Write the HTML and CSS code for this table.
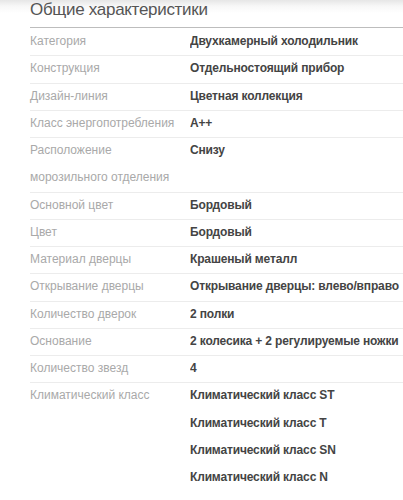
FILE: index.html
```html
<!DOCTYPE html>
<html lang="ru">
<head>
<meta charset="utf-8">
<link rel="stylesheet" href="styles.css">
</head>
<body>
<div class="page">
  <section class="specs">
    <h2 class="specs-title">Общие характеристики</h2>
    <div class="row"><div class="label">Категория</div><div class="value">Двухкамерный холодильник</div></div>
    <div class="row"><div class="label">Конструкция</div><div class="value">Отдельностоящий прибор</div></div>
    <div class="row"><div class="label">Дизайн-линия</div><div class="value">Цветная коллекция</div></div>
    <div class="row"><div class="label">Класс энергопотребления</div><div class="value">A++</div></div>
    <div class="row"><div class="label">Расположение<br>морозильного отделения</div><div class="value">Снизу</div></div>
    <div class="row"><div class="label">Основной цвет</div><div class="value">Бордовый</div></div>
    <div class="row"><div class="label">Цвет</div><div class="value">Бордовый</div></div>
    <div class="row"><div class="label">Материал дверцы</div><div class="value">Крашеный металл</div></div>
    <div class="row"><div class="label">Открывание дверцы</div><div class="value">Открывание дверцы: влево/вправо</div></div>
    <div class="row"><div class="label">Количество дверок</div><div class="value">2 полки</div></div>
    <div class="row"><div class="label">Основание</div><div class="value">2 колесика + 2 регулируемые ножки</div></div>
    <div class="row"><div class="label">Количество звезд</div><div class="value">4</div></div>
    <div class="row last"><div class="label">Климатический класс</div><div class="value">Климатический класс ST<br>Климатический класс T<br>Климатический класс SN<br>Климатический класс N</div></div>
  </section>
</div>
</body>
</html>
```
FILE: styles.css
```css
html, body {
  margin: 0;
  padding: 0;
  background: #fff;
  overflow: hidden;
}
.page {
  width: 403px;
  height: 500px;
  box-sizing: border-box;
  overflow: hidden;
  background: linear-gradient(to bottom, #e6e6e6 0px, #f7f7f7 6px, #ffffff 13px);
  padding-left: 30px;
  font-family: "Liberation Sans", Arial, sans-serif;
}
.specs {
  width: 373px;
}
.specs-title {
  margin: 0;
  height: 20px;
  padding-bottom: 7px;
  line-height: 20px;
  font-size: 17px;
  letter-spacing: -0.3px;
  font-weight: normal;
  color: #555;
  border-bottom: 1px solid #bdbdbd;
  box-sizing: content-box;
}
.row {
  display: grid;
  grid-template-columns: 160px 1fr;
  border-bottom: 1px solid #ececec;
  margin-bottom: -1px;
  font-size: 12px;
  line-height: 27.25px;
}
.row.last {
  border-bottom: none;
}
.label {
  color: #a9a9a9;
}
.value {
  color: #444;
  font-weight: bold;
  letter-spacing: -0.15px;
  white-space: nowrap;
  overflow: hidden;
}
```
